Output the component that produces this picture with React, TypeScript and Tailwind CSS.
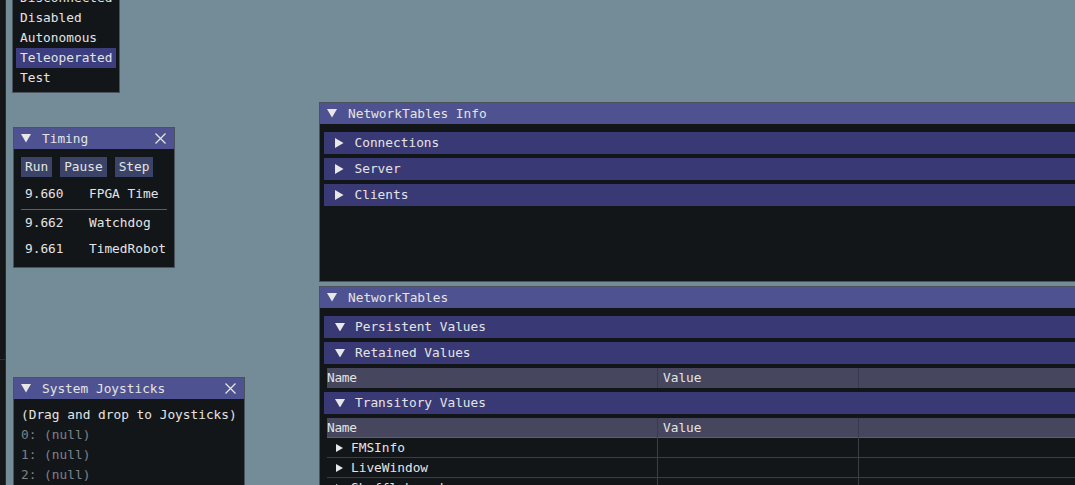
import React from 'react';

const FONT = "font-['DejaVu_Sans_Mono','Liberation_Mono',monospace] text-[12.8px]";

const DownTri = ({ size = 10 }: { size?: number }) => (
  <svg width={size} height={size * 0.85} viewBox="0 0 10 8.5" className="shrink-0">
    <polygon points="0,0 10,0 5,8.5" fill="#e8e8e8" />
  </svg>
);

const RightTri = ({ size = 10 }: { size?: number }) => (
  <svg width={size * 0.85} height={size} viewBox="0 0 8.5 10" className="shrink-0">
    <polygon points="0,0 8.5,5 0,10" fill="#e8e8e8" />
  </svg>
);

const CloseX = () => (
  <svg width="11" height="11" viewBox="0 0 11 11" className="shrink-0">
    <path d="M0.5 0.5 L10.5 10.5 M10.5 0.5 L0.5 10.5" stroke="#e8e8e8" strokeWidth="1.2" />
  </svg>
);

const TitleBar = ({ title, closable }: { title: string; closable?: boolean }) => (
  <div className="h-[21px] bg-[#4f5291] flex items-center pl-[7px] pr-[8px] text-[#e4e4e4]">
    <DownTri />
    <span className="ml-[11px] flex-1 whitespace-nowrap">{title}</span>
    {closable && <CloseX />}
  </div>
);

const Header = ({ label, open }: { label: string; open?: boolean }) => (
  <div className="h-[22px] bg-[#393a75] flex items-center pl-[11px] text-[#e4e4e4] whitespace-nowrap">
    {open ? <DownTri /> : <RightTri />}
    <span className={open ? 'ml-[10px]' : 'ml-[11px]'}>{label}</span>
  </div>
);

const TableHead = ({ underline }: { underline?: boolean }) => (
  <div className={`h-[20px] ml-[3px] bg-[#46465f] grid grid-cols-[331px_201px_1fr] text-[#e4e4e4] leading-[20px] ${underline ? 'border-b border-[#5a5a86]' : ''}`}>
    <div className="border-r border-[#3a3a4c] tracking-[-0.3px]">Name</div>
    <div className="border-r border-[#3a3a4c] pl-[5px]">Value</div>
    <div />
  </div>
);

const TreeRow = ({ label }: { label?: string }) => (
  <div className="h-[20px] ml-[3px] grid grid-cols-[331px_201px_1fr] border-b border-[#3c3e42] text-[#e4e4e4]">
    <div className="border-r border-[#3c3e42] flex items-center pl-[9px] whitespace-nowrap">
      {label && (
        <>
          <svg width="7" height="8" viewBox="0 0 7 8" className="shrink-0">
            <polygon points="0,0 7,4 0,8" fill="#e8e8e8" />
          </svg>
          <span className="ml-[8px]">{label}</span>
        </>
      )}
    </div>
    <div className="border-r border-[#3c3e42]" />
    <div />
  </div>
);

export default function App() {
  return (
    <div className={`relative w-[1075px] h-[485px] overflow-hidden bg-[#738c98] ${FONT}`}>
      {/* left edge strip */}
      <div className="absolute left-0 top-0 w-[6px] h-full bg-[#151617] border-r border-[#2a2e31]">
        <div className="mt-[359px] h-px bg-[#2c2f33]" />
      </div>

      {/* robot state window */}
      <div className="absolute left-[12px] top-[-21px] w-[108px] bg-[#131619] border border-[#4a535c] pt-[8px] pb-[4px] px-[3px] text-[#e4e4e4]">
        {['Disconnected', 'Disabled', 'Autonomous', 'Teleoperated', 'Test'].map(m => (
          <div key={m} className={`h-[20px] leading-[20px] pl-[4px] whitespace-nowrap ${m === 'Teleoperated' ? 'bg-[#3c3e80]' : ''}`}>
            {m}
          </div>
        ))}
      </div>

      {/* Timing */}
      <div className="absolute left-[13px] top-[127px] w-[162px] h-[141px] bg-[#131619] border border-[#4a535c] text-[#e4e4e4]">
        <TitleBar title="Timing" closable />
        <div className="px-[7px] pt-[8px]">
          <div className="flex gap-[8px]">
            {['Run', 'Pause', 'Step'].map(b => (
              <div key={b} className="h-[20px] leading-[20px] px-[4px] bg-[#3b4468]">{b}</div>
            ))}
          </div>
          <div className="h-[24px] mt-[5px] flex items-center">
            <span className="pl-[4px] w-[68px]">9.660</span>
            <span>FPGA Time</span>
          </div>
          <div className="mt-[3px] h-px bg-[#5b6068]" />
          <div className="h-[26px] flex items-center">
            <span className="pl-[4px] w-[68px]">9.662</span>
            <span>Watchdog</span>
          </div>
          <div className="h-[26px] flex items-center">
            <span className="pl-[4px] w-[68px]">9.661</span>
            <span>TimedRobot</span>
          </div>
        </div>
      </div>

      {/* System Joysticks */}
      <div className="absolute left-[13px] top-[377px] w-[232px] h-[120px] bg-[#131619] border border-[#4a535c] text-[#e4e4e4]">
        <TitleBar title="System Joysticks" closable />
        <div className="pl-[7px] pt-[6px]">
          <div className="h-[20px] leading-[20px] whitespace-nowrap">(Drag and drop to Joysticks)</div>
          {['0: (null)', '1: (null)', '2: (null)'].map(j => (
            <div key={j} className="h-[20px] leading-[20px] text-[#7f8286]">{j}</div>
          ))}
        </div>
      </div>

      {/* NetworkTables Info */}
      <div className="absolute left-[319px] top-[102px] w-[770px] h-[180px] bg-[#131619] border border-[#4a535c]">
        <TitleBar title="NetworkTables Info" />
        <div className="pl-[4px] pt-[8px] flex flex-col gap-[4px]">
          <Header label="Connections" />
          <Header label="Server" />
          <Header label="Clients" />
        </div>
      </div>

      {/* NetworkTables */}
      <div className="absolute left-[319px] top-[286px] w-[770px] h-[220px] bg-[#131619] border border-[#4a535c]">
        <TitleBar title="NetworkTables" />
        <div className="pl-[4px] pt-[8px] flex flex-col gap-[4px]">
          <Header label="Persistent Values" open />
          <Header label="Retained Values" open />
          <TableHead />
          <Header label="Transitory Values" open />
          <div>
            <TableHead underline />
            <TreeRow label="FMSInfo" />
            <TreeRow label="LiveWindow" />
            <TreeRow label="Shuffleboard" />
          </div>
        </div>
      </div>
    </div>
  );
}
